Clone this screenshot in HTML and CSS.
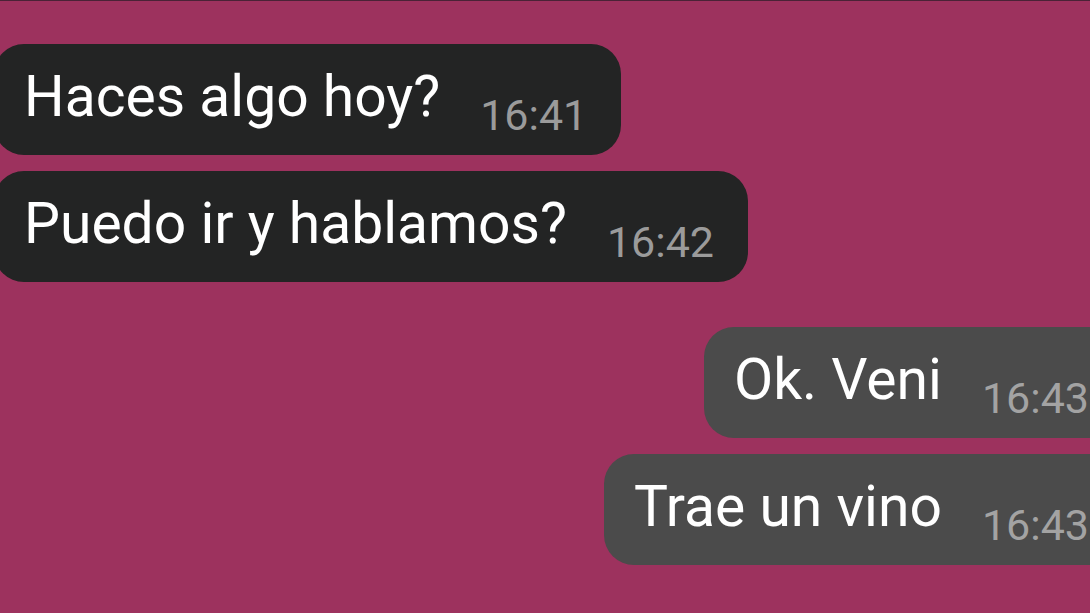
FILE: index.html
```html
<!DOCTYPE html>
<html lang="es">
<head>
  <meta charset="UTF-8" />
  <meta name="viewport" content="width=device-width, initial-scale=1.0"/>
  <title>Chat</title>
  <link rel="stylesheet" href="styles.css">
</head>
<body>

  <div class="chat">
    <div class="group">
      <div class="msg in">
        <span class="text">Haces algo hoy?</span>
        <span class="time">16:41</span>
      </div>
      <div class="msg in">
        <span class="text">Puedo ir y hablamos?</span>
        <span class="time">16:42</span>
      </div>
    </div>

    <div class="group">
      <div class="msg out">
        <span class="text">Ok. Veni</span>
        <span class="time">16:43</span>
      </div>
      <div class="msg out">
        <span class="text">Trae un vino</span>
        <span class="time">16:43</span>
      </div>
    </div>
  </div>

</body>
</html>
```

FILE: styles.css
```css
* {
  box-sizing: border-box;
}

html, body {
  height: 100%;
}

body {
  margin: 0;
  background: #9d325e;
  border-top: 1px solid #4a2236;
  font-family: Roboto, "Noto Sans", sans-serif;
  overflow: hidden;
}

.chat {
  display: flex;
  flex-direction: column;
  gap: 45px;
  padding-top: 43px;
}

.group {
  display: flex;
  flex-direction: column;
  gap: 16px;
}

.msg {
  display: flex;
  align-items: flex-start;
  width: max-content;
  padding: 24px 34px 18px 30px;
  border-radius: 30px;
  white-space: nowrap;
}

.msg.in {
  background: #232424;
  margin-left: -6px;
}

.msg.out {
  background: #4b4b4b;
  align-self: flex-end;
  margin-right: -33px;
}

.text {
  font-size: 57px;
  line-height: 1;
  color: #fff;
}

.time {
  font-size: 43px;
  line-height: 1;
  color: #9b9b9b;
  margin-top: 26px;
  margin-left: 40px;
}

.msg.out .time {
  color: #a3a3a3;
}
```
